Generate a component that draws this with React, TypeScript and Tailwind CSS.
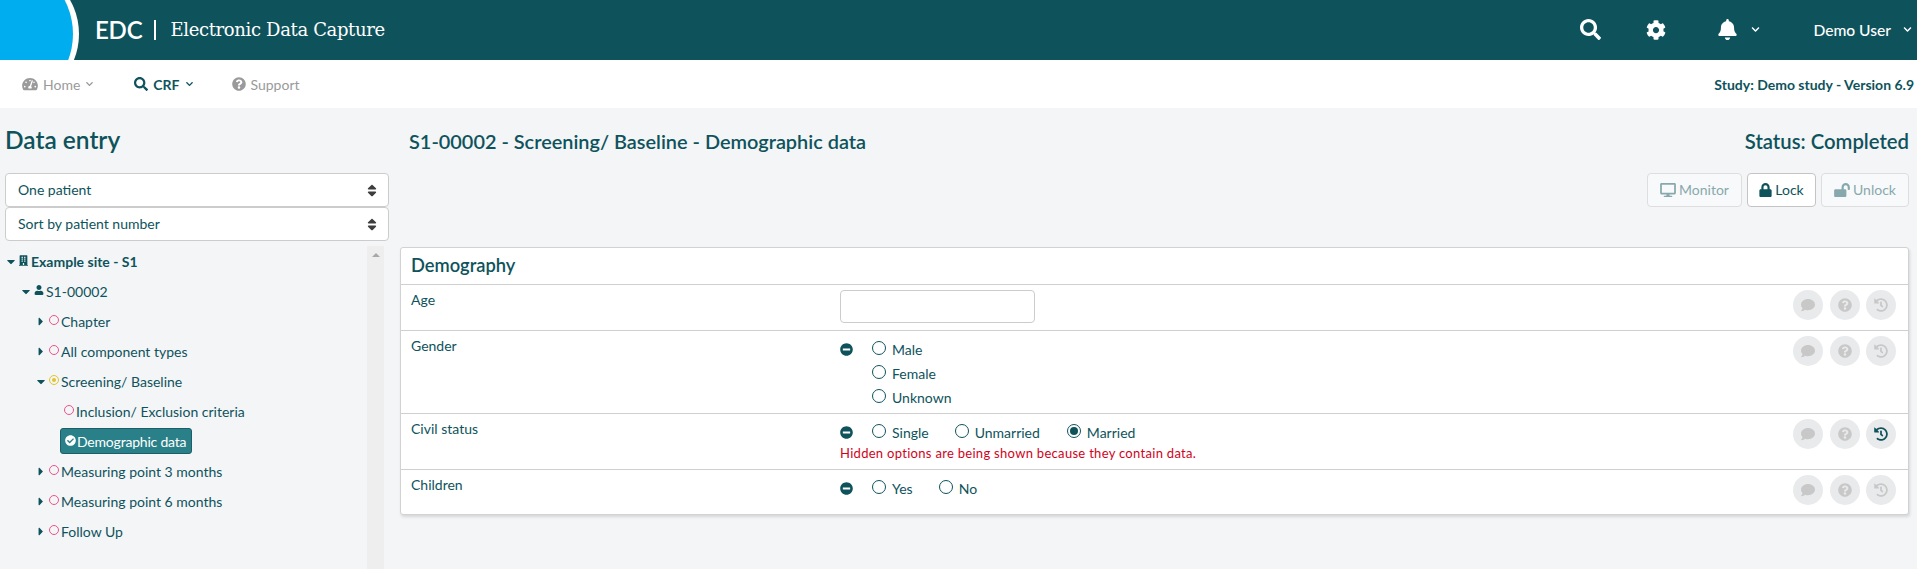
import React from "react";
import {
  FaTachometerAlt, FaSearch, FaQuestionCircle, FaCog, FaBell, FaChevronDown, FaSort, FaBuilding, FaUser,
  FaDesktop, FaLock, FaLockOpen, FaComment, FaHistory, FaMinusCircle, FaCheckCircle, FaCaretDown, FaCaretRight,
} from "react-icons/fa";

function Ring({ kind }: { kind: "empty" | "partial" | "done" }) {
  if (kind === "done")
    return <FaCheckCircle className="w-[11px] h-[11px] text-white mr-[1px] mb-[2px] shrink-0" />;
  if (kind === "partial")
    return (
      <span className="w-[10px] h-[10px] rounded-full border border-[#e0c52c] flex items-center justify-center mr-[2px] mb-[2px] shrink-0">
        <span className="w-[4px] h-[4px] rounded-full bg-[#e0c52c]" />
      </span>
    );
  return <span className="w-[10px] h-[10px] rounded-full border border-[#e9548a] mr-[2px] mb-[2px] shrink-0" />;
}

function TreeRow({ pad, caret, kind, label }: { pad: string; caret?: "down" | "right"; kind: "empty" | "partial"; label: string }) {
  return (
    <div className={`h-[30px] flex items-center ${pad}`}>
      {caret === "down" ? (
        <FaCaretDown className="w-[10px] h-[13px] mr-[3px] text-[#0e535c] shrink-0" />
      ) : (
        <FaCaretRight className="w-[10px] h-[13px] mr-[3px] text-[#0e535c] shrink-0" />
      )}
      <Ring kind={kind} />
      <span>{label}</span>
    </div>
  );
}

function Radio({ label, checked, className }: { label: string; checked?: boolean; className?: string }) {
  return (
    <div className={`flex items-center h-[24px] ${className ?? ""}`}>
      <span className="w-[14px] h-[14px] rounded-full border border-[#0e535c] flex items-center justify-center mr-[6px] mb-[3px] shrink-0">
        {checked && <span className="w-[8px] h-[8px] rounded-full bg-[#0e535c]" />}
      </span>
      <span>{label}</span>
    </div>
  );
}

function Actions({ active }: { active?: boolean }) {
  const circle = "w-[30px] h-[30px] rounded-full bg-[#e9eaeb] flex items-center justify-center text-[#c8c8c8]";
  return (
    <div className="flex items-start pt-[5px] pr-[12px] shrink-0">
      <span className={`${circle} mr-[7px]`}><FaComment className="w-[14px] h-[14px]" /></span>
      <span className={`${circle} mr-[6px]`}><FaQuestionCircle className="w-[14px] h-[14px]" /></span>
      <span className={circle}><FaHistory className={`w-[14px] h-[14px] ${active ? "text-[#0e535c]" : ""}`} /></span>
    </div>
  );
}

function Row({ label, children, active, height }: { label: string; children: React.ReactNode; active?: boolean; height: string }) {
  return (
    <div className={`flex border-t border-[#cfcfcf] ${height}`}>
      <div className="w-[439px] pl-[10px] pt-[4px] shrink-0">{label}</div>
      <div className="flex-1">{children}</div>
      <Actions active={active} />
    </div>
  );
}

function Minus() {
  return <FaMinusCircle className="w-[13px] h-[13px] text-[#0e535c] mr-[19px] shrink-0 mt-[6px]" />;
}

function Select({ label }: { label: string }) {
  return (
    <div className="h-[34px] w-[384px] bg-white border border-[#cccccc] rounded-[4px] flex items-center justify-between pl-[12px] pr-[11px]">
      <span className="pb-[2px]">{label}</span>
      <FaSort className="w-[10px] h-[15px] text-[#3d3d3d]" />
    </div>
  );
}

export default function App() {
  return (
    <div className="w-full h-screen overflow-hidden bg-[#f4f5f7] text-[#0e535c] text-[14px] font-['Lato',sans-serif]">
      <header className="h-[60px] bg-[#0e535c] relative flex items-center text-white pl-[95px] pr-[5px]">
        <svg className="absolute left-0 top-0" width="80" height="60" viewBox="0 0 80 60">
          <circle cx="10" cy="34" r="69" fill="#ffffff" />
          <circle cx="0" cy="34" r="73" fill="#00aeef" />
        </svg>
        <span className="relative text-[24px] font-semibold leading-none tracking-[-0.2px] mr-[12px]">EDC</span>
        <span className="relative w-[2px] h-[20px] bg-white mr-[14px]" />
        <span className="relative text-[18px] leading-none font-['DejaVu_Serif',serif] tracking-[-0.35px]">Electronic Data Capture</span>
        <div className="ml-auto flex items-center">
          <FaSearch className="w-[21px] h-[21px] mr-[45px]" />
          <FaCog className="w-[20px] h-[20px] mr-[52px]" />
          <FaBell className="w-[19px] h-[21px] mr-[14px]" />
          <FaChevronDown className="w-[9px] h-[9px] mr-[53px]" />
          <span className="text-[15.6px] font-medium mr-[12px] mt-[2px]">Demo User</span>
          <FaChevronDown className="w-[9px] h-[9px]" />
        </div>
      </header>

      <nav className="h-[48px] bg-white flex items-center pl-[22px] pr-[3px]">
        <div className="flex items-center text-[#9a9a9a] mr-[40px]">
          <FaTachometerAlt className="w-[16px] h-[14px] mr-[5px]" />
          <span>Home</span>
          <FaChevronDown className="w-[9px] h-[8px] ml-[5px]" />
        </div>
        <div className="flex items-center font-bold mr-[38px]">
          <FaSearch className="w-[14px] h-[14px] mr-[5px]" />
          <span>CRF</span>
          <FaChevronDown className="w-[9px] h-[8px] ml-[5px]" />
        </div>
        <div className="flex items-center text-[#9a9a9a]">
          <FaQuestionCircle className="w-[14px] h-[14px] mr-[5px]" />
          <span>Support</span>
        </div>
        <div className="ml-auto font-bold">Study: Demo study - Version 6.9</div>
      </nav>

      <div className="flex">
        <aside className="w-[390px] pl-[5px] shrink-0">
          <h2 className="text-[24.5px] font-semibold leading-none pt-[20px] h-[65px]">Data entry</h2>
          <Select label="One patient" />
          <Select label="Sort by patient number" />
          <div className="relative mt-[5px] h-[330px]">
            <div className="absolute left-[362px] top-0 w-[17px] h-full bg-[#eeeeee] flex justify-center pt-[7px]">
              <span className="w-0 h-0 border-x-[4px] border-x-transparent border-b-[4px] border-b-[#a8a8a8]" />
            </div>
            <div>
              <div className="h-[30px] flex items-center pl-[1px] font-bold">
                <FaCaretDown className="w-[10px] h-[13px] mr-[3px] shrink-0" />
                <FaBuilding className="w-[9px] h-[11px] mr-[3px] mb-[2px] shrink-0" />
                <span>Example site - S1</span>
              </div>
              <div className="h-[30px] flex items-center pl-[16px]">
                <FaCaretDown className="w-[10px] h-[13px] mr-[3px] shrink-0" />
                <FaUser className="w-[10px] h-[10px] mr-[2px] mb-[2px] shrink-0" />
                <span>S1-00002</span>
              </div>
              <TreeRow pad="pl-[31px]" caret="right" kind="empty" label="Chapter" />
              <TreeRow pad="pl-[31px]" caret="right" kind="empty" label="All component types" />
              <TreeRow pad="pl-[31px]" caret="down" kind="partial" label="Screening/ Baseline" />
              <div className="h-[30px] flex items-center pl-[59px]">
                <Ring kind="empty" />
                <span>Inclusion/ Exclusion criteria</span>
              </div>
              <div className="h-[30px] flex items-center pl-[55px]">
                <div className="h-[26px] w-[132px] pl-[4px] flex items-center bg-[#2a8088] border border-[#1d5f66] rounded-[3px] text-white">
                  <Ring kind="done" />
                  <span className="tracking-[-0.2px]">Demographic data</span>
                </div>
              </div>
              <TreeRow pad="pl-[31px]" caret="right" kind="empty" label="Measuring point 3 months" />
              <TreeRow pad="pl-[31px]" caret="right" kind="empty" label="Measuring point 6 months" />
              <TreeRow pad="pl-[31px]" caret="right" kind="empty" label="Follow Up" />
            </div>
          </div>
        </aside>

        <main className="w-[1509px] ml-[10px] shrink-0">
          <div className="flex justify-between items-start h-[65px] pt-[22px] pl-[9px]">
            <h1 className="text-[19.9px] font-semibold leading-[22px]">S1-00002 - Screening/ Baseline - Demographic data</h1>
            <span className="text-[20.3px] font-semibold leading-[22px]">Status: Completed</span>
          </div>
          <div className="flex justify-end gap-[5px] h-[74px]">
            <div className="w-[95px] h-[34px] pb-[1px] rounded-[4px] border border-[#dedede] bg-[#f8f9fa] text-[#87a9ad] flex items-center justify-center">
              <FaDesktop className="w-[16px] h-[14px] mr-[3px]" />Monitor
            </div>
            <div className="w-[69px] h-[34px] pb-[1px] rounded-[4px] border border-[#c4c4c4] bg-white flex items-center justify-center">
              <FaLock className="w-[13px] h-[14px] mr-[3px]" />Lock
            </div>
            <div className="w-[88px] h-[34px] pb-[1px] rounded-[4px] border border-[#dedede] bg-[#f8f9fa] text-[#87a9ad] flex items-center justify-center">
              <FaLockOpen className="w-[16px] h-[14px] mr-[3px]" />Unlock
            </div>
          </div>
          <section className="bg-white border border-[#d2d2d2] rounded-[3px] shadow-[1px_2px_3px_rgba(0,0,0,0.12)]">
            <div className="h-[36px] flex items-center pl-[10px] text-[18.3px] font-semibold">Demography</div>
            <Row label="Age" height="h-[46px]">
              <div className="mt-[5px] w-[195px] h-[33px] border border-[#cccccc] rounded-[4px] bg-white" />
            </Row>
            <Row label="Gender" height="h-[83px]">
              <div className="flex pt-[6px]">
                <Minus />
                <div>
                  <Radio label="Male" />
                  <Radio label="Female" />
                  <Radio label="Unknown" />
                </div>
              </div>
            </Row>
            <Row label="Civil status" active height="h-[56px]">
              <div className="flex pt-[6px]">
                <Minus />
                <Radio label="Single" className="mr-[26px]" />
                <Radio label="Unmarried" className="mr-[27px]" />
                <Radio label="Married" checked />
              </div>
              <div className="text-[#d0021b] text-[13px] tracking-[0.3px] leading-[18px]">Hidden options are being shown because they contain data.</div>
            </Row>
            <Row label="Children" height="h-[45px]">
              <div className="flex pt-[6px]">
                <Minus />
                <Radio label="Yes" className="mr-[26px]" />
                <Radio label="No" />
              </div>
            </Row>
          </section>
        </main>
      </div>
    </div>
  );
}
